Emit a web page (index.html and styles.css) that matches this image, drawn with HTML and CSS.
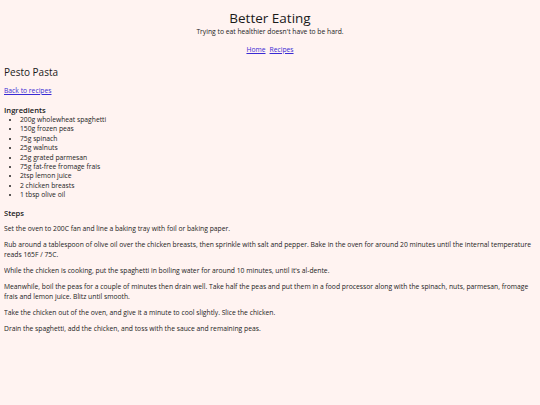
FILE: index.html
```html
<!DOCTYPE html>
<html lang="en">
<head>
<meta charset="utf-8">
<title>Better Eating</title>
<link rel="stylesheet" href="styles.css">
</head>
<body>
<header class="site-header">
  <h1 class="site-title">Better Eating</h1>
  <p class="tagline">Trying to eat healthier doesn't have to be hard.</p>
  <nav class="site-nav">
    <a href="#">Home</a>
    <a href="#">Recipes</a>
  </nav>
</header>
<main class="recipe">
  <h2 class="recipe-title">Pesto Pasta</h2>
  <p class="back"><a href="#">Back to recipes</a></p>
  <h3 class="section-title section-title--first">Ingredients</h3>
  <ul class="ingredients">
    <li>200g wholewheat spaghetti</li>
    <li>150g frozen peas</li>
    <li>75g spinach</li>
    <li>25g walnuts</li>
    <li>25g grated parmesan</li>
    <li>75g fat-free fromage frais</li>
    <li>2tsp lemon juice</li>
    <li>2 chicken breasts</li>
    <li>1 tbsp olive oil</li>
  </ul>
  <h3 class="section-title">Steps</h3>
  <div class="steps">
    <p>Set the oven to 200C fan and line a baking tray with foil or baking paper.</p>
    <p>Rub around a tablespoon of olive oil over the chicken breasts, then sprinkle with salt and pepper. Bake in the oven for around 20 minutes until the internal temperature reads 165F / 75C.</p>
    <p>While the chicken is cooking, put the spaghetti in boiling water for around 10 minutes, until it's al-dente.</p>
    <p>Meanwhile, boil the peas for a couple of minutes then drain well. Take half the peas and put them in a food processor along with the spinach, nuts, parmesan, fromage frais and lemon juice. Blitz until smooth.</p>
    <p>Take the chicken out of the oven, and give it a minute to cool slightly. Slice the chicken.</p>
    <p>Drain the spaghetti, add the chicken, and toss with the sauce and remaining peas.</p>
  </div>
</main>
</body>
</html>
```
FILE: styles.css
```css
html {
  background: #fff3f1;
}
body {
  margin: 4px;
  font-family: "Open Sans", "Noto Sans", sans-serif;
  font-size: 6.75px;
  line-height: 9px;
  color: #222;
  background: #fff3f1;
}
a {
  color: #3a2bd4;
}
.site-header {
  text-align: center;
}
.site-title {
  margin: 6px 0 0;
  font-size: 13.5px;
  line-height: 16px;
  font-weight: 500;
  color: #1a1a1a;
}
.tagline {
  margin: 1px 0 0;
}
.site-nav {
  margin-top: 9px;
  display: flex;
  justify-content: center;
  gap: 4px;
}
.recipe-title {
  margin: 11px 0 0;
  font-size: 10px;
  line-height: 14px;
  font-weight: 500;
  color: #1a1a1a;
}
.back {
  margin: 7px 0 0;
}
.section-title {
  margin: 9px 0 0;
  font-size: 7.6px;
  line-height: 9px;
  font-weight: 600;
  color: #1a1a1a;
}
.section-title--first {
  margin-top: 11px;
}
.ingredients {
  margin: 0;
  padding-left: 16px;
}
.ingredients li {
  line-height: 9.4px;
}
.steps p {
  margin: 6px 0;
  line-height: 10px;
}
```
